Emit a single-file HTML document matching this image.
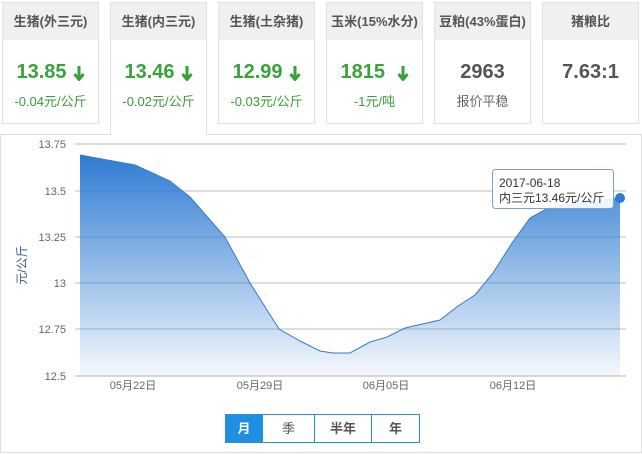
<!DOCTYPE html>
<html><head><meta charset="utf-8"><style>
body{margin:0;width:642px;height:454px;background:#fff;font-family:"Liberation Sans","Noto Sans CJK SC",sans-serif;position:relative;overflow:hidden}
.card{position:absolute;top:2px;width:97px;height:122px;border:1px solid #e2e2e2;box-sizing:border-box;text-align:center;background:#fff}
.card .h{background:#f0f0f0;height:37px;line-height:37px;font-size:13px;font-weight:bold;color:#555}
.card .v{margin-top:20px;font-size:20px;font-weight:bold;color:#3aa23a;height:24px;line-height:24px}
.card .v.g{color:#555}
.card .s{margin-top:7px;font-size:13px;color:#3a9a3a}
.card .s.g{color:#666}
.arr{display:inline-block;vertical-align:middle;margin-left:6px}
.panel{position:absolute;left:0;top:134px;width:642px;height:319px;border:1px solid #ddd;box-sizing:border-box}
.btns{position:absolute;left:225px;top:414px;height:29px;display:flex;border:1px solid #2a8fd9;box-sizing:border-box}
.btns div{height:27px;line-height:27px;text-align:center;font-size:13px;font-weight:bold;color:#555;border-left:1px solid #2a8fd9}
</style></head><body>
<div class="panel"></div>
<div class="card" style="left:2px"><div class="h">生猪(外三元)</div><div class="v">13.85<svg class="arr" width="12" height="16"><path d="M6 1V13M1.5 9L6 14.5L10.5 9" stroke="#3aa23a" stroke-width="3" fill="none"/></svg></div><div class="s">-0.04元/公斤</div></div>
<div class="card" style="left:110px;height:133px;border-bottom:none;z-index:2"><div class="h">生猪(内三元)</div><div class="v">13.46<svg class="arr" width="12" height="16"><path d="M6 1V13M1.5 9L6 14.5L10.5 9" stroke="#3aa23a" stroke-width="3" fill="none"/></svg></div><div class="s">-0.02元/公斤</div></div>
<div class="card" style="left:218px"><div class="h">生猪(土杂猪)</div><div class="v">12.99<svg class="arr" width="12" height="16"><path d="M6 1V13M1.5 9L6 14.5L10.5 9" stroke="#3aa23a" stroke-width="3" fill="none"/></svg></div><div class="s">-0.03元/公斤</div></div>
<div class="card" style="left:326px"><div class="h">玉米(15%水分)</div><div class="v">1815 <svg class="arr" width="12" height="16"><path d="M6 1V13M1.5 9L6 14.5L10.5 9" stroke="#3aa23a" stroke-width="3" fill="none"/></svg></div><div class="s">-1元/吨</div></div>
<div class="card" style="left:434px"><div class="h">豆粕(43%蛋白)</div><div class="v g">2963</div><div class="s g">报价平稳</div></div>
<div class="card" style="left:542px"><div class="h">猪粮比</div><div class="v g">7.63:1</div></div>
<svg style="position:absolute;left:0;top:0" width="642" height="454">
<defs><linearGradient id="g" x1="0" y1="0" x2="0" y2="1"><stop offset="0" stop-color="#2f7bd3"/><stop offset="1" stop-color="#2f7bd3" stop-opacity="0.05"/></linearGradient></defs>
<g stroke="#d4d4d4" stroke-width="1.5"><line x1="75" y1="144" x2="626" y2="144"/><line x1="75" y1="191" x2="626" y2="191"/><line x1="75" y1="237" x2="626" y2="237"/><line x1="75" y1="283" x2="626" y2="283"/><line x1="75" y1="329" x2="626" y2="329"/><line x1="75" y1="376" x2="626" y2="376" stroke="#ccc"/></g>
<path d="M80 155L135 165L170 181L190 197L225 237L250 283L279 329L300 341L320 351L333 353L350 353L370 342L387 337L405 328L440 320L458 306L475 295L493 273L512 243L530 218L550 207L620 198L620 376L80 376Z" fill="url(#g)"/>
<path d="M80 155L135 165L170 181L190 197L225 237L250 283L279 329L300 341L320 351L333 353L350 353L370 342L387 337L405 328L440 320L458 306L475 295L493 273L512 243L530 218L550 207L620 198" fill="none" stroke="#3a78c6" stroke-width="1"/>
<circle cx="620" cy="198" r="5" fill="#2f7bd3"/>
<g font-size="11" fill="#666" text-anchor="end" font-family="Liberation Sans"><text x="66" y="148">13.75</text><text x="66" y="195">13.5</text><text x="66" y="241">13.25</text><text x="66" y="287">13</text><text x="66" y="333">12.75</text><text x="66" y="380">12.5</text></g>
<text transform="translate(26,265) rotate(-90)" font-size="12" fill="#3a5a88" text-anchor="middle">元/公斤</text>
<g font-size="11" fill="#666" text-anchor="middle"><text x="133" y="389">05月22日</text><text x="260" y="389">05月29日</text><text x="386" y="389">06月05日</text><text x="513" y="389">06月12日</text></g>
<rect x="492.5" y="169.5" width="121" height="39" rx="3" fill="#fff" fill-opacity="0.9" stroke="#7aa0d8"/>
<text x="499" y="187" font-size="12" fill="#333">2017-06-18</text>
<text x="499" y="202" font-size="12" fill="#333">内三元13.46元/公斤</text>
</svg>
<div class="btns"><div style="width:36px;background:#1e8fe1;color:#fff;border-left:none">月</div><div style="width:51px;font-weight:normal">季</div><div style="width:56px">半年</div><div style="width:47px">年</div></div>
</body></html>
